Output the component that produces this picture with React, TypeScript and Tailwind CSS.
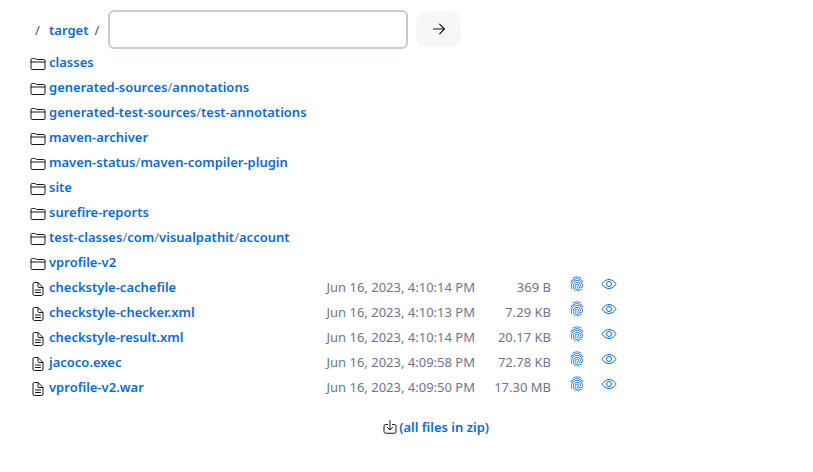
import { useState } from "react";
import {
  IoDocumentTextOutline,
  IoEyeOutline,
  IoFingerPrintOutline,
  IoFolderOutline,
} from "react-icons/io5";

const folders: string[][] = [
  ["classes"],
  ["generated-sources", "annotations"],
  ["generated-test-sources", "test-annotations"],
  ["maven-archiver"],
  ["maven-status", "maven-compiler-plugin"],
  ["site"],
  ["surefire-reports"],
  ["test-classes", "com", "visualpathit", "account"],
  ["vprofile-v2"],
];

const files = [
  { name: "checkstyle-cachefile", date: "Jun 16, 2023, 4:10:14 PM", size: "369 B" },
  { name: "checkstyle-checker.xml", date: "Jun 16, 2023, 4:10:13 PM", size: "7.29 KB" },
  { name: "checkstyle-result.xml", date: "Jun 16, 2023, 4:10:14 PM", size: "20.17 KB" },
  { name: "jacoco.exec", date: "Jun 16, 2023, 4:09:58 PM", size: "72.78 KB" },
  { name: "vprofile-v2.war", date: "Jun 16, 2023, 4:09:50 PM", size: "17.30 MB" },
];

const link = "font-semibold text-[#0b6bd6]";

function ArrowIcon() {
  return (
    <svg
      width="16"
      height="16"
      viewBox="0 0 512 512"
      fill="none"
      stroke="currentColor"
      strokeWidth="36"
      strokeLinecap="round"
      strokeLinejoin="round"
      aria-hidden="true"
    >
      <path d="m276 102 154 154-154 154M420 256H80" />
    </svg>
  );
}

function DownloadIcon() {
  return (
    <svg
      width="16"
      height="16"
      viewBox="0 0 512 512"
      fill="none"
      stroke="currentColor"
      strokeWidth="32"
      strokeLinecap="round"
      strokeLinejoin="round"
      className="mb-[2px] text-[#14141f]"
      aria-hidden="true"
    >
      <path d="M336 176h56a56 56 0 0 1 56 56v168a56 56 0 0 1-56 56H120a56 56 0 0 1-56-56V232a56 56 0 0 1 56-56h56" />
      <path d="m176 272 80 80 80-80M256 48v288" />
    </svg>
  );
}

export default function App() {
  const [pattern, setPattern] = useState("");
  return (
    <main className="bg-white px-[30px] pt-[10px] pb-8 font-['Noto_Sans',sans-serif] text-[13px] leading-[25px] text-[#73738c]">
      <form className="flex h-10 items-start" onSubmit={(e) => e.preventDefault()}>
        <div className="flex h-10 items-center">
          <span className="w-[19px] pl-[5px] text-[#505060]">/</span>
          <a href="#target" className={link}>target</a>
          <span className="w-5 pl-[6px] text-[#505060]">/</span>
        </div>
        <input
          type="text"
          aria-label="File pattern"
          value={pattern}
          onChange={(e) => setPattern(e.target.value)}
          className="h-[39px] w-[300px] rounded-md border-2 border-[#c3ccd1] px-2 outline-none"
        />
        <button
          type="submit"
          aria-label="Go"
          className="mt-px ml-2 flex h-9 w-[45px] items-center justify-center rounded-[10px] bg-[#f7f7f9] text-[#14141f]"
        >
          <ArrowIcon />
        </button>
      </form>
      <table className="border-collapse">
        <tbody>
          {folders.map((parts) => (
            <tr key={parts.join("/")} className="h-[25px]">
              <td className="w-[19px] p-0">
                <IoFolderOutline size={16} className="mt-[2px] text-[#14141f]" />
              </td>
              <td colSpan={5} className="p-0">
                {parts.map((part, i) => (
                  <span key={part}>
                    {i > 0 && "/"}
                    <a href={"#" + part} className={link}>{part}</a>
                  </span>
                ))}
              </td>
            </tr>
          ))}
          {files.map((f) => (
            <tr key={f.name} className="h-[25px]">
              <td className="w-[19px] p-0">
                <IoDocumentTextOutline size={16} className="mt-[2px] text-[#14141f]" />
              </td>
              <td className="w-[256px] p-0">
                <a href={"#" + f.name} className={link}>{f.name}</a>
              </td>
              <td className="w-[170px] p-0 text-right whitespace-nowrap">{f.date}</td>
              <td className="w-[76px] p-0 text-right whitespace-nowrap">{f.size}</td>
              <td className="w-[34px] p-0">
                <a href="#fingerprint" aria-label={"Fingerprint of " + f.name} className="flex justify-end pb-2 text-[#0b6bd6]">
                  <IoFingerPrintOutline size={16} />
                </a>
              </td>
              <td className="w-8 p-0">
                <a href="#view" aria-label={"View " + f.name} className="flex justify-end pb-2 text-[#0b6bd6]">
                  <IoEyeOutline size={16} />
                </a>
              </td>
            </tr>
          ))}
        </tbody>
      </table>
      <div className="mt-[15px] flex w-[587px] justify-end">
        <a href="#zip" className={"mr-32 flex items-center gap-px " + link}>
          <DownloadIcon />
          (all files in zip)
        </a>
      </div>
    </main>
  );
}
